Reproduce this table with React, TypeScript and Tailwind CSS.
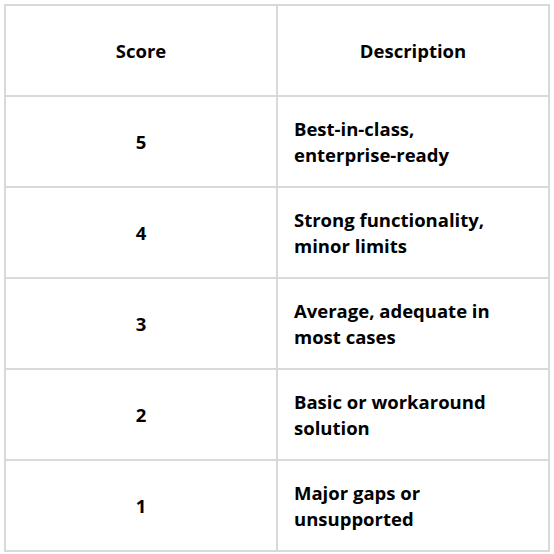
const rows = [
  { score: "5", desc: ["Best-in-class,", "enterprise-ready"] },
  { score: "4", desc: ["Strong functionality,", "minor limits"] },
  { score: "3", desc: ["Average, adequate in", "most cases"] },
  { score: "2", desc: ["Basic or workaround", "solution"] },
  { score: "1", desc: ["Major gaps or", "unsupported"] },
];

export default function App() {
  return (
    <div
      className="w-[554px] h-[554px] bg-white p-[4px] text-black"
      style={{ fontFamily: '"Open Sans", "Noto Sans", sans-serif' }}
    >
      <table className="w-[546px] border-collapse table-fixed">
        <thead>
          <tr className="h-[91px]">
            <th className="w-1/2 border-2 border-[#d9d9d9] text-center text-[18.5px] font-bold">
              Score
            </th>
            <th className="w-1/2 border-2 border-[#d9d9d9] text-center text-[18.5px] font-bold">
              Description
            </th>
          </tr>
        </thead>
        <tbody>
          {rows.map((row) => (
            <tr key={row.score} className="h-[91px]">
              <td className="border-2 border-[#d9d9d9] text-center text-[18.5px] font-bold">
                {row.score}
              </td>
              <td className="border-2 border-[#d9d9d9] pl-[16px] pr-2 text-[18.5px] font-bold leading-[26px]">
                {row.desc[0]}
                <br />
                {row.desc[1]}
              </td>
            </tr>
          ))}
        </tbody>
      </table>
    </div>
  );
}
